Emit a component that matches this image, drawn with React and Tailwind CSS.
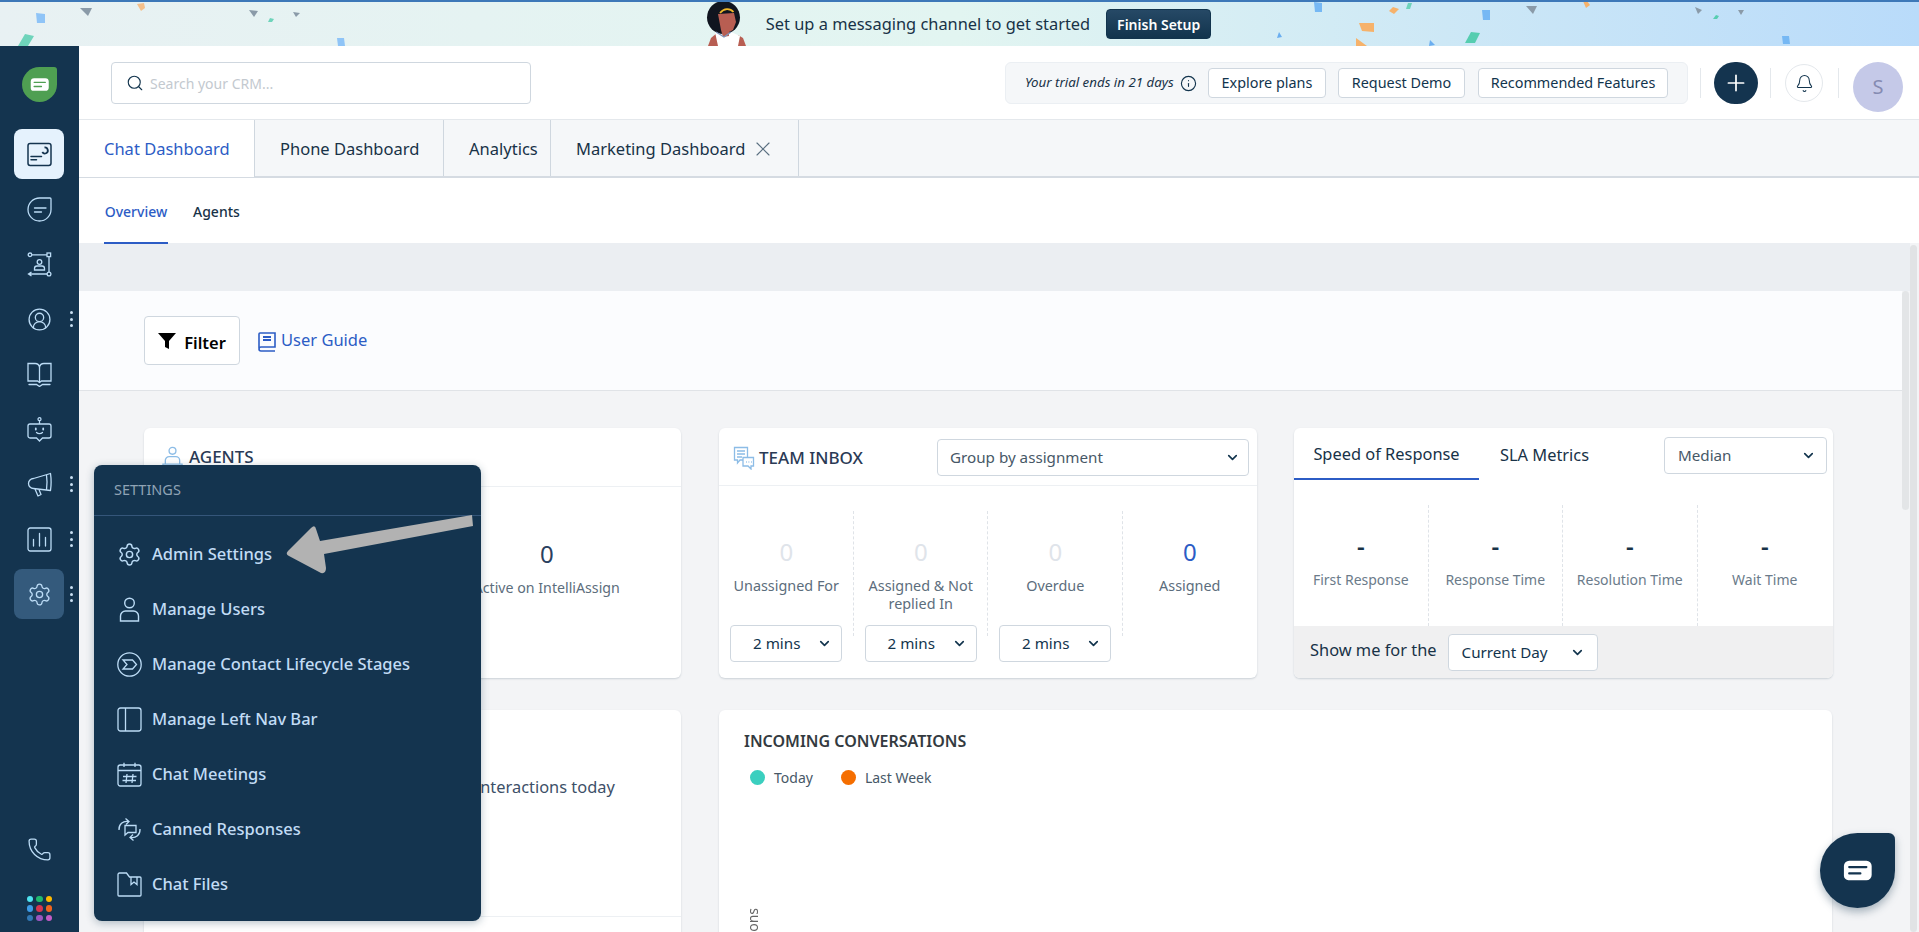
import React from 'react'
import {
  Bell,
  ChevronDown,
  CircleUserRound,
  Info,
  Phone,
  Plus,
  Search,
  Settings,
  X,
} from 'lucide-react'

const NAVY = '#14344f'

function Leaf({ color, className, small }) {
  return (
    <svg viewBox="0 0 36 36" className={className}>
      <path d="M18 0H33a3 3 0 0 1 3 3V18A18 18 0 0 1 0 18 18 18 0 0 1 18 0Z" fill={color} />
      <g transform={small ? 'translate(5 5) scale(0.72)' : undefined}>
        <path d="M12.5 11.5H24a3.5 3.5 0 0 1 3.5 3.5V21a3.5 3.5 0 0 1-3.5 3.5H12a3 3 0 0 1-3-3V15a3.5 3.5 0 0 1 3.5-3.5Z" fill="#fff" />
        <path d="M12.5 15.8H24M12.5 20H20" stroke={color} strokeWidth="1.4" strokeLinecap="round" />
      </g>
    </svg>
  )
}

function DashIcon() {
  return (
    <svg viewBox="0 0 25 25" fill="none" stroke={NAVY} strokeWidth="1.5" className="w-[25px] h-[25px]">
      <rect x="1" y="1.5" width="23" height="22" rx="2.2" />
      <path d="M4 14.5H14.5M4 17.8H9.5" strokeLinecap="round" />
      <path d="M17.5 5.5a3 3 0 1 1-2.2 4.6" strokeWidth="1.8" />
    </svg>
  )
}

function ChatLeafIcon() {
  return (
    <svg viewBox="0 0 25 25" fill="none" stroke="#bcdcf6" strokeWidth="1.3" className="w-[25px] h-[25px]">
      <path d="M12.5 1H23a1 1 0 0 1 1 1V12.5a11.5 11.5 0 0 1-23 0A11.5 11.5 0 0 1 12.5 1Z" />
      <path d="M7.5 11H19M7.5 15H14.5" strokeLinecap="round" />
    </svg>
  )
}

function FlowIcon() {
  return (
    <svg viewBox="0 0 25 25" fill="none" stroke="#bcdcf6" strokeWidth="1.3" className="w-[25px] h-[25px]">
      <circle cx="3" cy="2.8" r="1.8" />
      <rect x="20" y="1" width="3.6" height="3.6" />
      <circle cx="22" cy="22" r="1.9" />
      <path d="M5 2.8H20M22 4.6V20M20 22H2M4.5 20L1.5 22L4.5 24" />
      <circle cx="12.5" cy="10" r="2.3" />
      <path d="M7.5 18v-1.5a2.5 2.5 0 0 1 2.5-2.5h5a2.5 2.5 0 0 1 2.5 2.5V18Z" />
    </svg>
  )
}

function BookIcon() {
  return (
    <svg viewBox="0 0 25 25" fill="none" stroke="#bcdcf6" strokeWidth="1.3" className="w-[25px] h-[25px]">
      <path d="M1 1.5H8a4.5 4.5 0 0 1 4.5 3.5A4.5 4.5 0 0 1 17 1.5H24V19H14.5L12.5 20.5L10.5 19H1Z" />
      <path d="M12.5 5V20.5" />
      <path d="M2 22.5H9.5L12.5 24.5L15.5 22.5H23" strokeLinecap="round" />
    </svg>
  )
}

function BotIcon() {
  return (
    <svg viewBox="0 0 25 25" fill="none" stroke="#bcdcf6" strokeWidth="1.3" className="w-[25px] h-[25px]">
      <circle cx="12.5" cy="2.2" r="1.5" />
      <path d="M12.5 3.8V7" />
      <path d="M3 7H22a2 2 0 0 1 2 2V19a2 2 0 0 1-2 2H15.5L12.5 24L9.5 21H3a2 2 0 0 1-2-2V9a2 2 0 0 1 2-2Z" />
      <path d="M8.8 11.5v1M16.2 11.5v1" strokeWidth="1.8" strokeLinecap="round" />
      <path d="M9.5 15.5c1.6 1.6 4.4 1.6 6 0" strokeLinecap="round" />
    </svg>
  )
}

function MegaphoneIcon() {
  return (
    <svg viewBox="0 0 25 25" fill="none" stroke="#bcdcf6" strokeWidth="1.3" strokeLinejoin="round" className="w-[25px] h-[25px]">
      <path d="M23.5 1.5L6.5 6.5A5 5 0 0 0 6.5 16.5L23.5 18.5C24.3 13 24.3 7 23.5 1.5Z" />
      <path d="M19.5 3C20.2 7.5 20.2 13 19.5 18" />
      <path d="M8 17L11 24L14 22.5L12 17.5" />
    </svg>
  )
}

function ChartIcon() {
  return (
    <svg viewBox="0 0 25 25" fill="none" stroke="#bcdcf6" strokeWidth="1.3" className="w-[25px] h-[25px]">
      <rect x="1" y="1" width="23" height="23" rx="2.2" />
      <path d="M6.5 19V12.5M12.5 19V6.5M18.5 19V10.5" strokeLinecap="round" />
    </svg>
  )
}

function AppsIcon() {
  const dots = ['#4fe3f0', '#1fb96d', '#ffb900', '#3d9be6', '#d8344f', '#f2641e', '#3278b4', '#9a56c0', '#c45cc6']
  return (
    <div className="grid grid-cols-3 gap-[3px]">
      {dots.map((c, i) => (
        <span key={i} className="block w-[6.5px] h-[6.5px] rounded-full" style={{ background: c }} />
      ))}
    </div>
  )
}

function Kebab() {
  return (
    <span className="absolute left-[69.5px] top-1/2 -translate-y-1/2 flex flex-col gap-[3.5px]">
      <i className="block w-[3px] h-[3px] rounded-full bg-[#c9dff2]" />
      <i className="block w-[3px] h-[3px] rounded-full bg-[#c9dff2]" />
      <i className="block w-[3px] h-[3px] rounded-full bg-[#c9dff2]" />
    </span>
  )
}

function Banner() {
  const shapes = [
    ['36,13 45,14 45,23 37,23', '#8fc4f7'],
    ['80,8 92,8 88,16', '#8a9aa8'],
    ['137,4 144,3 145,8 141,11', '#f6c08a'],
    ['25,34 34,36 28,46 18,46', '#6fd4bb'],
    ['249,10 258,11 254,17', '#8a9aa8'],
    ['270,18 274,19 272,22 268,22', '#6fd4bb'],
    ['293,12 300,13 296,17', '#8a9aa8'],
    ['337,38 344,38 345,46 338,46', '#8fc4f7'],
    ['1277,38 1279,32 1282,37', '#6aaef0'],
    ['1314,2 1322,3 1322,12 1315,12', '#76b8f4'],
    ['1408,3 1412,3 1410,9 1406,9', '#6fd4bb'],
    ['1393,7 1399,9 1394,14 1389,11', '#f6b26b'],
    ['1359,23 1374,23 1374,32 1362,31', '#f6b26b'],
    ['1356,38 1367,46 1356,46', '#f6b26b'],
    ['1430,40 1435,45 1429,46', '#6aaef0'],
    ['1482,10 1490,10 1490,20 1483,20', '#76b8f4'],
    ['1526,6 1537,6 1533,14', '#8a9aa8'],
    ['1471,32 1480,33 1475,43 1465,43', '#56cdb0'],
    ['1583,1 1587,1 1590,5 1586,8', '#f6b26b'],
    ['1695,7 1702,10 1698,14', '#8a9aa8'],
    ['1716,15 1719,16 1717,19 1713,19', '#56cdb0'],
    ['1738,10 1744,10 1741,15', '#8a9aa8'],
    ['1782,36 1789,36 1790,44 1783,44', '#76b8f4'],
  ]
  return (
    <div className="relative h-[46px] shrink-0 border-t-2 border-[#3d78b8] bg-gradient-to-r from-[#e8f1f3] via-[#e2f5f1] to-[#b9dbfa] flex items-center justify-center overflow-hidden pr-[8px]">
      <svg viewBox="0 0 1919 46" className="absolute left-0 top-[-2px] w-[1919px] h-[46px]">
        {shapes.map(([p, c], i) => (
          <polygon key={i} points={p} fill={c} />
        ))}
      </svg>
      <svg viewBox="0 0 48 46" className="relative w-[48px] h-[46px] mr-[18px] mt-[-2px]">
        <path d="M8 46L11 38L17 33L20 46Z" fill="#b85e52" />
        <path d="M38 35L43 38L46 46L36 46Z" fill="#b85e52" />
        <path d="M15 32L25 36L31 32L40 36L38 46H18Z" fill="#fff" />
        <circle cx="23.5" cy="17.5" r="16.5" fill="#10151f" />
        <path d="M18 14L34 13L36 22L33 30L29 32L29 36L23 37L21 30Z" fill="#b85e52" />
        <path d="M20 13C24 8 30 8 33.5 12" stroke="#f0b92a" strokeWidth="1.8" fill="none" />
        <path d="M16 32L24 37L31 32" stroke="#7e93b8" strokeWidth="1.3" fill="none" />
      </svg>
      <span className="relative text-[16.4px] text-[#183247] mr-[16px] mt-[1px]">Set up a messaging channel to get started</span>
      <button className="relative w-[105px] h-[30px] rounded-[4px] bg-gradient-to-b from-[#264966] to-[#12344d] text-white text-[14px] font-semibold border border-[#12344d]">
        Finish Setup
      </button>
    </div>
  )
}

function Sidebar() {
  const iconCls = 'w-[25px] h-[25px] text-[#bcdcf6]'
  const rows = [
    { icon: <DashIcon />, active: true },
    { icon: <ChatLeafIcon /> },
    { icon: <FlowIcon /> },
    { icon: <CircleUserRound className={iconCls} strokeWidth={1.25} />, more: true },
    { icon: <BookIcon /> },
    { icon: <BotIcon /> },
    { icon: <MegaphoneIcon />, more: true },
    { icon: <ChartIcon />, more: true },
    { icon: <Settings className={iconCls} strokeWidth={1.25} />, more: true, selected: true },
  ]
  return (
    <aside className="w-[79px] shrink-0 bg-[#14344f] flex flex-col items-center">
      <Leaf color="#4f9f52" className="w-[35px] h-[35px] mt-[21px] -ml-[1px]" />
      <div className="mt-[24.5px] w-full">
        {rows.map((row, i) => (
          <div key={i} className="relative h-[55px] flex items-center">
            <div
              className={
                row.active
                  ? 'ml-[14px] w-[50px] h-[50px] rounded-[8px] bg-[#e5f2fd] flex items-center justify-center'
                  : row.selected
                    ? 'ml-[14px] w-[50px] h-[50px] rounded-[8px] bg-[#345a7c] flex items-center justify-center'
                    : 'ml-[14px] w-[50px] h-[50px] flex items-center justify-center'
              }
            >
              {row.icon}
            </div>
            {row.more && <Kebab />}
          </div>
        ))}
      </div>
      <div className="mt-auto flex flex-col items-center pb-[11px]">
        <Phone className={iconCls} strokeWidth={1.25} />
        <div className="mt-[34px]">
          <AppsIcon />
        </div>
      </div>
    </aside>
  )
}

function Header() {
  const btn = 'h-[30px] rounded-[4px] border border-[#cfd7df] bg-white text-[14.4px] text-[#12344d]'
  return (
    <header className="h-[74px] shrink-0 bg-white border-b border-[#e4e8ec] flex items-start pt-[16px]">
      <div className="ml-[32px] w-[420px] h-[42px] rounded-[4px] border border-[#cfd7df] flex items-center pl-[14px]">
        <Search className="w-[18px] h-[18px] text-[#12344d]" strokeWidth={1.5} />
        <span className="ml-[6px] text-[14px] text-[#c3c9cf]">Search your CRM...</span>
      </div>
      <div className="ml-auto w-[683px] h-[42px] rounded-[6px] border border-[#ebeff3] bg-[#f5f7f9] flex items-center pl-[19px]">
        <span className="w-[151px] whitespace-nowrap text-[13.3px] italic text-[#183247]">Your trial ends in 21 days</span>
        <Info className="ml-[4px] w-[17px] h-[17px] text-[#12344d]" strokeWidth={1.6} />
        <button className={`${btn} ml-[11px] w-[118px]`}>Explore plans</button>
        <button className={`${btn} ml-[12px] w-[127px]`}>Request Demo</button>
        <button className={`${btn} ml-[13px] w-[190px]`}>Recommended Features</button>
      </div>
      <div className="ml-[12px] w-px h-[30px] mt-[6px] bg-[#e4e8ec]" />
      <div className="ml-[13px] w-[44px] h-[42px] rounded-full bg-[#14344f] flex items-center justify-center">
        <Plus className="w-[26px] h-[26px] text-white" strokeWidth={1.6} />
      </div>
      <div className="ml-[12px] w-px h-[30px] mt-[6px] bg-[#e4e8ec]" />
      <div className="ml-[14px] mt-[2px] w-[38px] h-[38px] rounded-full border border-[#e4e8ec] flex items-center justify-center">
        <Bell className="w-[19px] h-[19px] text-[#12344d]" strokeWidth={1.3} />
      </div>
      <div className="ml-[15px] w-px h-[30px] mt-[6px] bg-[#e4e8ec]" />
      <div className="ml-[14px] mr-[16px] w-[50px] h-[50px] rounded-full bg-[#c5c9e8] flex items-center justify-center text-[20px] text-[#858bb2]">
        S
      </div>
    </header>
  )
}

function Tabs() {
  const tab = 'h-full flex items-center text-[16.5px] text-[#183247] border-r border-[#cfd7df] pt-[2px]'
  return (
    <>
      <div className="h-[58px] shrink-0 bg-[#f5f7f9] border-b-[2px] border-[#d5dbe2] flex">
        <div className="h-[57px] w-[176px] bg-white border-r border-[#cfd7df] flex items-center pl-[25px] pt-[2px] text-[16.5px] text-[#2c5cc5]">
          Chat Dashboard
        </div>
        <div className={`${tab} w-[189px] pl-[25px]`}>Phone Dashboard</div>
        <div className={`${tab} w-[107px] pl-[25px]`}>Analytics</div>
        <div className={`${tab} w-[248px] pl-[25px]`}>
          Marketing Dashboard
          <X className="ml-[6px] w-[24px] h-[24px] text-[#596f80]" strokeWidth={1.1} />
        </div>
      </div>
      <div className="h-[65px] shrink-0 bg-white flex pl-[25px]">
        <div className="relative z-10 h-[66px] w-[64px] border-b-[2px] border-[#2c5cc5] flex items-center justify-center pt-[2px] text-[14px] font-medium text-[#2c5cc5]">
          Overview
        </div>
        <div className="h-full ml-[25px] pt-[2px] flex items-center text-[14px] font-medium text-[#183247]">Agents</div>
      </div>
    </>
  )
}

function Select({ label, className, pad = 'px-[16px]', text = 'text-[15.2px]', color = 'text-[#475867]' }) {
  return (
    <div className={`bg-white rounded-[4px] border border-[#cfd7df] flex items-center justify-between ${pad} ${className}`}>
      <span className={`${text} ${color}`}>{label}</span>
      <ChevronDown className="w-[15px] h-[15px] text-[#12344d]" strokeWidth={2.6} />
    </div>
  )
}

function TeamStat({ label, blue, last, select }) {
  return (
    <div className="relative w-[134.5px] h-[125px] flex flex-col items-center">
      {!last && <span className="absolute right-0 top-0 h-full border-r border-dashed border-[#dfe3e8]" />}
      <div className={`mt-[23px] text-[24px] leading-[36px] ${blue ? 'text-[#2c5cc5]' : 'text-[#dfe4ea]'}`}>0</div>
      <div className="mt-[7px] w-[116px] text-center text-[14.4px] leading-[18px] text-[#5c6d7c]">{label}</div>
      {select && <Select label="2 mins" className="absolute top-[114px] left-[11px] w-[112px] h-[37px] z-10" pad="pl-[22px] pr-[9px]" color="text-[#12344d]" />}
    </div>
  )
}

function SpeedStat({ label, last }) {
  return (
    <div className={`w-[134.5px] h-full flex flex-col items-center ${last ? '' : 'border-r border-dashed border-[#dfe3e8]'}`}>
      <div className="mt-[23px] text-[24px] leading-[36px] font-semibold text-[#183247]">-</div>
      <div className="mt-[6px] text-[14px] leading-[20px] text-[#6b7b8a] whitespace-nowrap">{label}</div>
    </div>
  )
}

function Cards() {
  const card = 'bg-white rounded-[6px] shadow-[0_1px_2px_rgba(24,50,71,0.18)] overflow-hidden'
  return (
    <div className="pl-[65px] pt-[37px]">
      <div className="flex gap-[38px]">
        <section className={`${card} w-[537px] h-[250px]`}>
          <div className="h-[59px] border-b border-[#edf0f3] flex items-center pl-[18px]">
            <svg viewBox="0 0 22 24" fill="none" stroke="#8cbce6" strokeWidth="1.4" className="w-[21px] h-[23px]">
              <circle cx="11" cy="5" r="3.6" />
              <path d="M3.5 19v-4a4 4 0 0 1 4-4h7a4 4 0 0 1 4 4v4M1 19h20v3H1Z" />
            </svg>
            <span className="ml-[6px] text-[17px] font-medium text-[#2a3a55]">AGENTS</span>
          </div>
          <div className="flex">
            <div className="w-1/2" />
            <div className="w-1/2 flex flex-col items-center pt-[49px]">
              <div className="text-[24px] leading-[36px] text-[#2a3f5f]">0</div>
              <div className="mt-[6px] text-[14.2px] leading-[20px] text-[#5c6d7c]">Active on IntelliAssign</div>
            </div>
          </div>
        </section>

        <section className={`${card} w-[538px] h-[250px]`}>
          <div className="h-[58px] border-b border-[#edf0f3] flex items-center pl-[14px]">
            <svg viewBox="0 0 22 24" fill="none" stroke="#8cbce6" strokeWidth="1.3" className="w-[22px] h-[24px] mt-[2px]">
              <path d="M1.5 1.5H14.5V14H7L4.5 17V14H1.5Z" />
              <path d="M4 5H12M4 8H12M4 11H9" />
              <path d="M10 11.5H20.5V20H18V23L15 20H10Z" fill="#fff" />
              <path d="M13 16h.8M15.5 16h.8M18 16h.8" />
            </svg>
            <span className="ml-[4px] mt-[3px] text-[17px] font-medium text-[#2a3a55]">TEAM INBOX</span>
            <Select label="Group by assignment" className="ml-auto mr-[8px] w-[312px] h-[37px] mt-[2px]" pad="pl-[12px] pr-[8px]" />
          </div>
          <div className="flex mt-[25px]">
            <TeamStat label="Unassigned For" select />
            <TeamStat label="Assigned & Not replied In" select />
            <TeamStat label="Overdue" select />
            <TeamStat label="Assigned" blue last />
          </div>
        </section>

        <section className={`${card} w-[539px] -ml-[1px] h-[250px] flex flex-col`}>
          <div className="relative h-[52px] shrink-0 flex">
            <div className="w-[185px] border-b-[2.5px] border-[#2c5cc5] flex items-center justify-center pt-[3px] text-[16.4px] text-[#183247]">
              Speed of Response
            </div>
            <div className="ml-[21px] pt-[3px] flex items-center text-[16.4px] text-[#183247]">SLA Metrics</div>
            <Select label="Median" className="absolute right-[6px] top-[9px] w-[163px] h-[37px]" pad="pl-[13px] pr-[10px]" />
          </div>
          <div className="flex mt-[25px] h-[121px]">
            <SpeedStat label="First Response" />
            <SpeedStat label="Response Time" />
            <SpeedStat label="Resolution Time" />
            <SpeedStat label="Wait Time" last />
          </div>
          <div className="flex-1 bg-[#f0f0f1] flex items-center pl-[16px]">
            <span className="text-[16.4px] text-[#183247] mt-[-4px]">Show me for the</span>
            <Select label="Current Day" className="ml-[11px] w-[150px] h-[37px]" pad="pl-[13px] pr-[12px]" color="text-[#12344d]" />
          </div>
        </section>
      </div>

      <div className="flex gap-[38px] mt-[32px]">
        <section className={`${card} w-[537px] h-[300px]`}>
          <div className="h-[207px] border-b border-[#edf0f3] pt-[66px] pl-[332px] text-[16.4px] leading-[22px] text-[#3d5068]">
            interactions today
          </div>
        </section>
        <section className={`${card} w-[1113px] h-[300px] relative`}>
          <div className="pl-[25px] pt-[21px] text-[16px] leading-[20px] font-semibold text-[#333a40]">INCOMING CONVERSATIONS</div>
          <div className="pl-[31px] mt-[16px] flex items-center text-[14px] text-[#475867]">
            <span className="w-[15px] h-[15px] rounded-full bg-[#3bcfbf]" />
            <span className="ml-[9px]">Today</span>
            <span className="ml-[28px] w-[15px] h-[15px] rounded-full bg-[#f56e00]" />
            <span className="ml-[9px]">Last Week</span>
          </div>
          <span className="absolute left-[24px] top-[198px] [writing-mode:vertical-rl] rotate-180 text-[14px] leading-[20px] text-[#666] whitespace-nowrap">Conversations</span>
        </section>
      </div>
    </div>
  )
}

function SettingsMenu() {
  const icon = 'w-[25px] h-[25px]'
  const items = [
    {
      label: 'Admin Settings',
      icon: <Settings className={`${icon} text-[#bcdcf6]`} strokeWidth={1.4} />,
    },
    {
      label: 'Manage Users',
      icon: (
        <svg viewBox="0 0 25 25" fill="none" stroke="#bcdcf6" strokeWidth="1.4" className={icon}>
          <circle cx="12.5" cy="6" r="4.8" />
          <path d="M3.5 24v-5a5 5 0 0 1 5-5h8a5 5 0 0 1 5 5v5Z" />
        </svg>
      ),
    },
    {
      label: 'Manage Contact Lifecycle Stages',
      icon: (
        <svg viewBox="0 0 25 25" fill="none" stroke="#bcdcf6" strokeWidth="1.3" className={icon}>
          <circle cx="12.5" cy="12.5" r="11.7" />
          <path d="M6 8H15.5L19.5 12.5L15.5 17H6L10 12.5Z" />
        </svg>
      ),
    },
    {
      label: 'Manage Left Nav Bar',
      icon: (
        <svg viewBox="0 0 25 25" fill="none" stroke="#bcdcf6" strokeWidth="1.3" className={icon}>
          <rect x="1" y="1" width="23" height="23" rx="2.5" />
          <path d="M8.5 1V24" />
        </svg>
      ),
    },
    {
      label: 'Chat Meetings',
      icon: (
        <svg viewBox="0 0 25 25" fill="none" stroke="#bcdcf6" strokeWidth="1.3" className={icon}>
          <rect x="1" y="3" width="23" height="21" rx="2.2" />
          <path d="M1 8.5H24M7 .8V5M18 .8V5M10 12L9 21M16 12L15 21M6 14.5H19.5M5.5 18.5H19" />
        </svg>
      ),
    },
    {
      label: 'Canned Responses',
      icon: (
        <svg viewBox="0 0 25 25" fill="none" stroke="#bcdcf6" strokeWidth="1.3" className={icon}>
          <path d="M8 8.5H19V15.5H11L8 18Z" />
          <path d="M2 13C1.5 7.5 6 3.5 11.5 4.5M8.5 1.5L12 4.5L9 7.5" />
          <path d="M23 12C23.5 17.5 19 21.5 13.5 20.5M16.5 23.5L13 20.5L16 17.5" />
        </svg>
      ),
    },
    {
      label: 'Chat Files',
      icon: (
        <svg viewBox="0 0 25 25" fill="none" stroke="#bcdcf6" strokeWidth="1.3" className={icon}>
          <path d="M2.5 1H9.5L12.5 5H23a1 1 0 0 1 1 1V23a1 1 0 0 1-1 1H2a1 1 0 0 1-1-1V2.5A1.5 1.5 0 0 1 2.5 1Z" />
          <path d="M14 5V12.5L17 10L20 12.5V5" />
        </svg>
      ),
    },
  ]
  return (
    <div className="absolute left-[94px] top-[465px] w-[387px] h-[456px] rounded-[8px] bg-[#14344f] shadow-[0_2px_8px_rgba(18,52,77,0.3)] z-20">
      <div className="h-[51px] border-b border-[#35567a] flex items-center pl-[20px] text-[14.5px] text-[#8fa3b5]">SETTINGS</div>
      <div className="pt-[11px]">
        {items.map((item) => (
          <div key={item.label} className="h-[55px] flex items-center pl-[23px]">
            {item.icon}
            <span className="ml-[10px] text-[16.5px] font-medium text-[#c2dcf5]">{item.label}</span>
          </div>
        ))}
      </div>
      <svg viewBox="0 0 200 70" className="absolute left-[190px] top-[48px] w-[200px] h-[70px]">
        <path d="M188 2L189 13L40 41L42 55Q42 61 37 60L5 43Q1 41 4 38L27 15Q31 11 32 16L36 28Z" fill="#b2b2b2" />
      </svg>
    </div>
  )
}

function BookGlyph() {
  return (
    <svg viewBox="0 0 18 20" fill="none" stroke="#2c5cc5" strokeWidth="1.6" className="w-[18px] h-[20px]">
      <path d="M1 16V2a1 1 0 0 1 1-1H17V15H3a2 2 0 0 0-2 2 2 2 0 0 0 2 2H17" />
      <path d="M5 5H13M5 8H13" strokeWidth="1.8" />
    </svg>
  )
}

function Main() {
  return (
    <main className="relative flex-1 min-w-0 flex flex-col overflow-hidden">
      <Header />
      <Tabs />
      <div className="relative flex-1 bg-[#f3f4f6] overflow-hidden">
        <div className="h-[48px] bg-[#ebeef2] mr-[9px]" />
        <div className="h-[100px] mr-[17px] bg-[#fbfcfe] border-b border-[#e0e3e7] flex items-start pl-[65px]">
          <div className="mt-[25px] w-[96px] h-[49px] bg-white rounded-[4px] border border-[#cfd7df] flex items-center justify-center gap-[8px] text-[16.5px] font-semibold text-black">
            <svg viewBox="0 0 18 18" className="w-[18px] h-[18px] mt-[1px]">
              <path d="M0 1H18L11 9V17L7 15V9Z" fill="#000" />
            </svg>
            <span className="mt-[5px]">Filter</span>
          </div>
          <div className="mt-[41px] ml-[18px] flex items-center text-[16.5px] text-[#2c5cc5]">
            <BookGlyph />
            <span className="ml-[5px] leading-[22px] mt-[-4px]">User Guide</span>
          </div>
        </div>
        <Cards />
        <span className="absolute right-[10px] top-[48px] w-[7px] h-[219px] rounded-[4px] bg-[#e3e5e7]" />
        <span className="absolute right-[2px] top-[2px] bottom-0 w-[7px] rounded-[4px] bg-[#e1e3e5]" />
        <Leaf small color="#14344f" className="absolute left-[1741px] top-[590px] w-[75px] h-[75px] drop-shadow-[0_4px_4px_rgba(18,52,77,0.35)]" />
      </div>
    </main>
  )
}

export default function App() {
  return (
    <div className="relative h-[932px] w-full overflow-hidden flex flex-col bg-white font-['Noto_Sans','Liberation_Sans',sans-serif]">
      <Banner />
      <div className="flex-1 flex min-h-0">
        <Sidebar />
        <Main />
      </div>
      <SettingsMenu />
    </div>
  )
}
